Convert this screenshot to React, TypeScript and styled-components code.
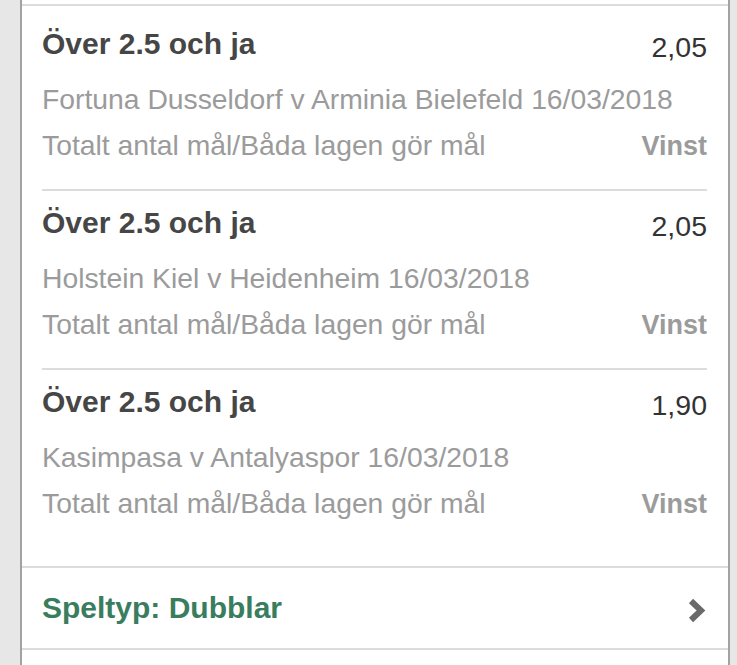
import React from 'react';
import styled, { createGlobalStyle } from 'styled-components';

const GlobalStyle = createGlobalStyle`
  html, body {
    margin: 0;
    padding: 0;
    background: #e7e7e7;
    font-family: "Liberation Sans", Arial, sans-serif;
    -webkit-font-smoothing: antialiased;
  }
`;

const Page = styled.div`
  height: 665px;
  overflow: hidden;
  padding-left: 20px;
  width: 710px;
`;

const Panel = styled.div`
  background: #fff;
  border-left: 2px solid #a2a2a2;
  border-right: 2px solid #a2a2a2;
  min-height: 665px;
  padding-top: 4px;
`;

const BetList = styled.div`
  border-top: 2px solid #dcdcdc;
  padding: 6px 21px 19px 20px;
`;

const BetRow = styled.div<{ first?: boolean }>`
  border-top: ${({ first }) => (first ? 'none' : '2px solid #dcdcdc')};
  padding: 14px 0 21px;
`;

const RowHead = styled.div`
  display: flex;
  justify-content: space-between;
  align-items: baseline;
  height: 36px;
  line-height: 36px;
`;

const Selection = styled.span`
  font-size: 30px;
  font-weight: 700;
  color: #464646;
`;

const Odds = styled.span`
  font-size: 28.5px;
  color: #333;
  position: relative;
  top: 3px;
`;

const Details = styled.div`
  margin-top: 14px;
`;

const Line = styled.div`
  display: flex;
  justify-content: space-between;
  align-items: baseline;
  height: 46px;
  line-height: 46px;
  font-size: 28.3px;
  color: #9b9b9b;
  white-space: nowrap;
`;

const Result = styled.span`
  font-size: 27px;
  font-weight: 700;
  color: #9b9b9b;
`;

const Footer = styled.div`
  display: flex;
  align-items: center;
  justify-content: space-between;
  height: 80px;
  padding: 0 22px 0 20px;
  border-top: 2px solid #dcdcdc;
  border-bottom: 2px solid #dcdcdc;
`;

const BetType = styled.span`
  font-size: 30px;
  font-weight: 700;
  color: #3a7d5e;
`;

const Chevron = () => (
  <svg width="20" height="28" viewBox="0 0 20 28" style={{ marginTop: 6 }}>
    <path d="M5 4 L15 13.5 L5 23" fill="none" stroke="#6a6a6a" strokeWidth="6" strokeLinejoin="miter" />
  </svg>
);

const bets = [
  { match: 'Fortuna Dusseldorf v Arminia Bielefeld 16/03/2018', odds: '2,05' },
  { match: 'Holstein Kiel v Heidenheim 16/03/2018', odds: '2,05' },
  { match: 'Kasimpasa v Antalyaspor 16/03/2018', odds: '1,90' },
];

export default function App() {
  return (
    <>
      <GlobalStyle />
      <Page>
        <Panel>
          <BetList>
            {bets.map((b, i) => (
              <BetRow key={i} first={i === 0}>
                <RowHead>
                  <Selection>Över 2.5 och ja</Selection>
                  <Odds>{b.odds}</Odds>
                </RowHead>
                <Details>
                  <Line>{b.match}</Line>
                  <Line>
                    <span>Totalt antal mål/Båda lagen gör mål</span>
                    <Result>Vinst</Result>
                  </Line>
                </Details>
              </BetRow>
            ))}
          </BetList>
          <Footer>
            <BetType>Speltyp: Dubblar</BetType>
            <Chevron />
          </Footer>
        </Panel>
      </Page>
    </>
  );
}
